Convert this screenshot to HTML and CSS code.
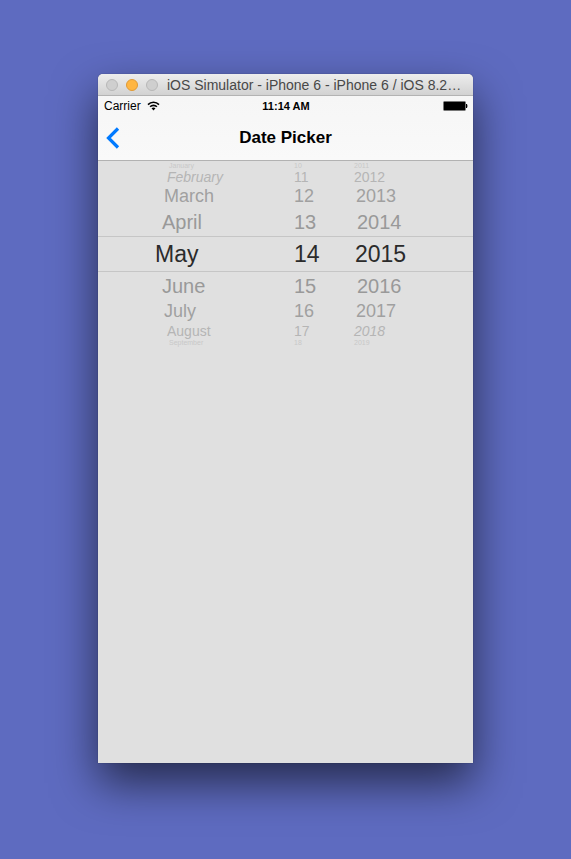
FILE: index.html
```html
<!DOCTYPE html>
<html lang="en">
<head>
<meta charset="utf-8">
<meta name="viewport" content="width=device-width">
<title>Date Picker</title>
<link rel="stylesheet" href="styles.css">
</head>
<body>
<main class="window">
  <header class="titlebar">
    <button class="light" type="button" aria-label="Close"></button>
    <button class="light light-minimize" type="button" aria-label="Minimize"></button>
    <button class="light" type="button" aria-label="Zoom"></button>
    <span class="window-title">iOS Simulator - iPhone 6 - iPhone 6 / iOS 8.2…</span>
  </header>
  <div class="bars">
    <div class="statusbar">
      <span class="carrier">Carrier
        <svg width="13" height="10" viewBox="0 0 13 10" aria-hidden="true">
          <path d="M1 3.6C4 .5 9 .5 12 3.6M3.1 5.8C5 3.9 8 3.9 9.9 5.8" fill="none" stroke="#000" stroke-width="1.6"/>
          <path d="M4.5 7.3Q6.500 5.700 8.500 7.300L6.500 9.400Z"/>
        </svg>
      </span>
      <span class="clock">11:14 AM</span>
      <svg class="battery" width="25" height="10" viewBox="0 0 25 10" aria-hidden="true">
        <rect x=".5" y=".5" width="22" height="9" rx="1" fill="#000" stroke="#777"/>
        <path d="M23 3h1q1 2 0 4h-1z"/>
      </svg>
    </div>
    <nav class="navbar">
      <button class="back" type="button" aria-label="Back">
        <svg width="14" height="22" viewBox="0 0 14 22" aria-hidden="true">
          <path d="M12 1.500L2.500 11L12 20.500" fill="none" stroke="#007aff" stroke-width="3.200"/>
        </svg>
      </button>
      <h1>Date Picker</h1>
    </nav>
  </div>
  <form class="picker">
    <fieldset class="wheel months" aria-label="Month">
      <label class="far"><input type="radio" name="month">January</label>
      <label class="edge tilt"><input type="radio" name="month">February</label>
      <label class="mid"><input type="radio" name="month">March</label>
      <label class="near"><input type="radio" name="month">April</label>
      <label class="current"><input type="radio" name="month" checked>May</label>
      <label class="near"><input type="radio" name="month">June</label>
      <label class="mid"><input type="radio" name="month">July</label>
      <label class="edge"><input type="radio" name="month">August</label>
      <label class="far"><input type="radio" name="month">September</label>
    </fieldset>
    <fieldset class="wheel days" aria-label="Day">
      <label class="far"><input type="radio" name="day">10</label>
      <label class="edge"><input type="radio" name="day">11</label>
      <label class="mid"><input type="radio" name="day">12</label>
      <label class="near"><input type="radio" name="day">13</label>
      <label class="current"><input type="radio" name="day" checked>14</label>
      <label class="near"><input type="radio" name="day">15</label>
      <label class="mid"><input type="radio" name="day">16</label>
      <label class="edge"><input type="radio" name="day">17</label>
      <label class="far"><input type="radio" name="day">18</label>
    </fieldset>
    <fieldset class="wheel years" aria-label="Year">
      <label class="far"><input type="radio" name="year">2011</label>
      <label class="edge"><input type="radio" name="year">2012</label>
      <label class="mid"><input type="radio" name="year">2013</label>
      <label class="near"><input type="radio" name="year">2014</label>
      <label class="current"><input type="radio" name="year" checked>2015</label>
      <label class="near"><input type="radio" name="year">2016</label>
      <label class="mid"><input type="radio" name="year">2017</label>
      <label class="edge tilt"><input type="radio" name="year">2018</label>
      <label class="far"><input type="radio" name="year">2019</label>
    </fieldset>
  </form>
</main>
</body>
</html>
```
FILE: styles.css
```css
* { box-sizing: border-box; }
body {
  margin: 0;
  min-height: 100vh;
  padding: 74px 98px 96px;
  display: flex;
  background: #5e6bc0;
  font-family: "Liberation Sans", Arial, sans-serif;
  color: #000;
}
button { padding: 0; border: 0; background: none; }
svg { display: block; }

.window {
  flex: 1;
  min-width: 0;
  display: flex;
  flex-direction: column;
  background: #e0e0e0;
  border-radius: 5px 5px 0 0;
  box-shadow: 0 0 1px rgba(0, 0, 0, .5), 0 20px 45px rgba(0, 0, 0, .6);
}
.titlebar {
  height: 22px;
  padding: 0 10px 0 8px;
  display: flex;
  align-items: center;
  gap: 8px;
  border-bottom: 1px solid #b3b3b3;
  border-radius: 5px 5px 0 0;
  background: linear-gradient(#ededed, #d2d2d2);
}
.light {
  flex: none;
  width: 12px;
  height: 12px;
  border: 1px solid #b8b8b8;
  border-radius: 50%;
  background: #cfcfcf;
}
.light-minimize { border-color: #e09a35; background: #ffb643; }
.window-title {
  flex: 1;
  padding-left: 1px;
  overflow: hidden;
  white-space: nowrap;
  text-overflow: ellipsis;
  font-size: 14px;
  line-height: 20px;
  color: #484848;
}

.bars {
  border-bottom: 1px solid #b2b2b2;
  background: linear-gradient(#f6f6f6, #f9f9f9);
}
.statusbar {
  height: 20px;
  padding: 0 5px 0 6px;
  display: grid;
  grid-template-columns: 1fr auto 1fr;
  align-items: center;
  font-size: 11px;
  line-height: 20px;
}
.carrier { display: flex; align-items: center; gap: 6px; font-size: 12px; }
.clock { font-weight: bold; }
.battery { justify-self: end; }
.navbar {
  height: 44px;
  padding: 0 8px;
  display: grid;
  grid-template-columns: 1fr auto 1fr;
  align-items: center;
}
.back { justify-self: start; }
h1 { margin: 0; font-size: 17px; line-height: 22px; }

.picker {
  padding-top: 1px;
  display: grid;
  grid-template-columns: 186fr 60fr 129fr;
}
.wheel {
  min-width: 0;
  margin: 0;
  padding: 0;
  border: 0;
  display: flex;
  flex-direction: column;
}
.wheel label {
  display: flex;
  align-items: center;
  padding-left: 10px;
}
.wheel input {
  position: absolute;
  appearance: none;
  margin: 0;
  opacity: 0;
}
.wheel .current {
  height: 36px;
  border: solid #c6c6c6;
  border-width: 1px 0;
  font-size: 23px;
  color: #2b2b2b;
}
.wheel .near { height: 28px; font-size: 20px; color: #999; }
.wheel .mid { height: 23px; font-size: 18px; color: #a0a0a0; }
.wheel .edge { height: 16px; font-size: 14px; line-height: 16px; color: #b5b5b5; }
.wheel .far { height: 7px; font-size: 7px; line-height: 7px; color: #c8c8c8; }
.tilt { font-style: italic; }
.months .current { padding-left: 57px; }
.months .near { padding-left: 64px; }
.months .mid { padding-left: 66px; }
.months .edge { padding-left: 69px; }
.months .far { padding-left: 71px; }
.years .current { padding-left: 11px; }
.years .near { padding-left: 13px; }
.years .mid { padding-left: 12px; }
```
